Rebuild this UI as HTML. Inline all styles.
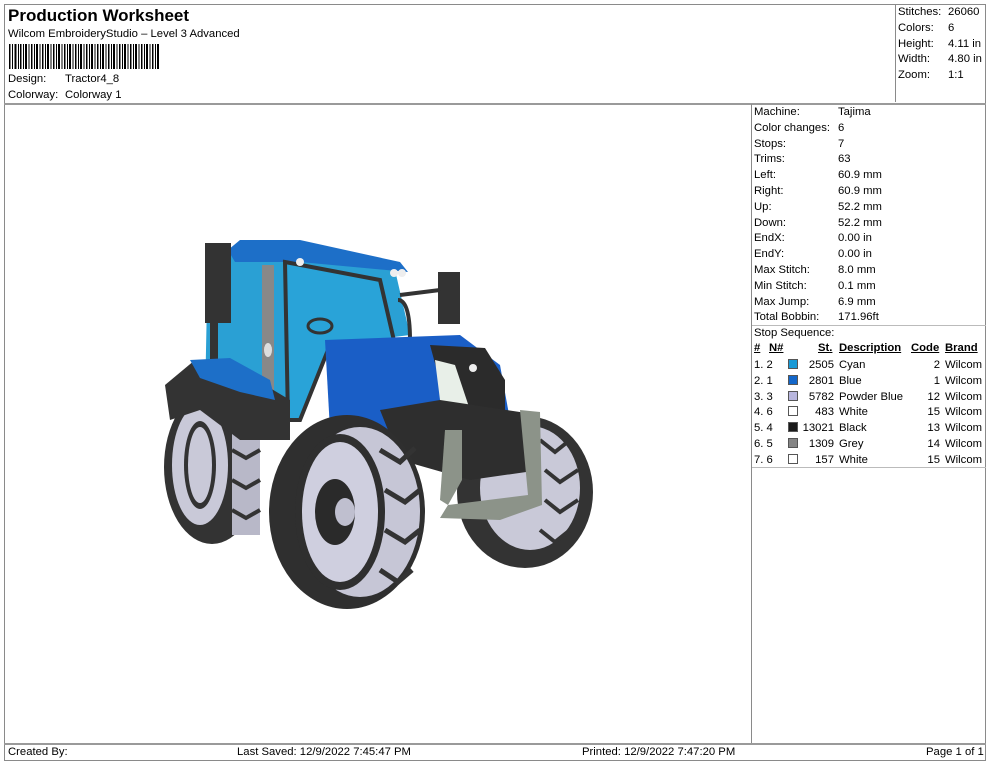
<!DOCTYPE html>
<html><head><meta charset="utf-8">
<style>
*{margin:0;padding:0;box-sizing:border-box}
body{width:990px;height:762px;background:#fff;font-family:"Liberation Sans",Arial,sans-serif;font-size:11.3px;color:#000;position:relative;overflow:hidden}
.a{position:absolute;white-space:nowrap}
.ln{position:absolute;background:#8a8a8a}
.sw{display:inline-block;width:10px;height:10px;border:1px solid #555;vertical-align:-1px}
</style></head><body>
<div class="ln" style="left:4px;top:4px;width:982px;height:1px"></div>
<div class="ln" style="left:4px;top:4px;width:1px;height:757px"></div>
<div class="ln" style="left:985px;top:4px;width:1px;height:757px"></div>
<div class="ln" style="left:4px;top:103px;width:982px;height:2px;background:#9a9a9a"></div>
<div class="ln" style="left:895px;top:4px;width:1px;height:98px"></div>
<div class="ln" style="left:751px;top:104px;width:1px;height:640px"></div>
<div class="ln" style="left:752px;top:325px;width:234px;height:1px;background:#bbb"></div>
<div class="ln" style="left:752px;top:467px;width:234px;height:1px;background:#bbb"></div>
<div class="ln" style="left:4px;top:743px;width:982px;height:2px;background:#9a9a9a"></div>
<div class="ln" style="left:4px;top:760px;width:982px;height:1px"></div>

<div class="a" style="left:8px;top:6px;font-size:17px;font-weight:bold">Production Worksheet</div>
<div class="a" style="left:8px;top:28px">Wilcom EmbroideryStudio – Level 3 Advanced</div>
<svg class="a" style="left:9px;top:44px" width="150" height="25">
<rect x="0" y="0" width="1.5" height="25"/><rect x="3" width="1" height="25"/><rect x="5.5" width="2" height="25"/><rect x="9" width="1" height="25"/><rect x="11" width="1.5" height="25"/><rect x="14" width="1" height="25"/><rect x="16" width="2" height="25"/><rect x="19.5" width="1" height="25"/><rect x="22" width="1.5" height="25"/><rect x="25" width="1" height="25"/><rect x="27" width="2" height="25"/><rect x="30.5" width="1" height="25"/><rect x="33" width="1.5" height="25"/><rect x="36" width="1" height="25"/><rect x="38" width="2" height="25"/><rect x="41.5" width="1" height="25"/><rect x="44" width="1.5" height="25"/><rect x="47" width="1" height="25"/><rect x="49" width="2" height="25"/><rect x="52.5" width="1" height="25"/><rect x="55" width="1.5" height="25"/><rect x="58" width="1" height="25"/><rect x="60" width="2" height="25"/><rect x="63.5" width="1" height="25"/><rect x="66" width="1.5" height="25"/><rect x="69" width="1" height="25"/><rect x="71" width="2" height="25"/><rect x="74.5" width="1" height="25"/><rect x="77" width="1.5" height="25"/><rect x="80" width="1" height="25"/><rect x="82" width="2" height="25"/><rect x="85.5" width="1" height="25"/><rect x="88" width="1.5" height="25"/><rect x="91" width="1" height="25"/><rect x="93" width="2" height="25"/><rect x="96.5" width="1" height="25"/><rect x="99" width="1.5" height="25"/><rect x="102" width="1" height="25"/><rect x="104" width="2" height="25"/><rect x="107.5" width="1" height="25"/><rect x="110" width="1.5" height="25"/><rect x="113" width="1" height="25"/><rect x="115" width="2" height="25"/><rect x="118.5" width="1" height="25"/><rect x="121" width="1.5" height="25"/><rect x="124" width="1" height="25"/><rect x="126" width="2" height="25"/><rect x="129.5" width="1" height="25"/><rect x="132" width="1.5" height="25"/><rect x="135" width="1" height="25"/><rect x="137" width="2" height="25"/><rect x="140.5" width="1" height="25"/><rect x="143" width="1.5" height="25"/><rect x="146" width="1" height="25"/><rect x="148" width="2" height="25"/>
</svg>
<div class="a" style="left:8px;top:73px">Design:</div><div class="a" style="left:65px;top:73px">Tractor4_8</div>
<div class="a" style="left:8px;top:89px">Colorway:</div><div class="a" style="left:65px;top:89px">Colorway 1</div>

<div class="a" style="left:898px;top:5px;line-height:15.8px">Stitches:<br>Colors:<br>Height:<br>Width:<br>Zoom:</div>
<div class="a" style="left:948px;top:5px;line-height:15.8px">26060<br>6<br>4.11 in<br>4.80 in<br>1:1</div>

<div class="a" style="left:754px;top:105px;line-height:15.8px">Machine:<br>Color changes:<br>Stops:<br>Trims:<br>Left:<br>Right:<br>Up:<br>Down:<br>EndX:<br>EndY:<br>Max Stitch:<br>Min Stitch:<br>Max Jump:<br>Total Bobbin:<br>Stop Sequence:</div>
<div class="a" style="left:838px;top:105px;line-height:15.8px">Tajima<br>6<br>7<br>63<br>60.9 mm<br>60.9 mm<br>52.2 mm<br>52.2 mm<br>0.00 in<br>0.00 in<br>8.0 mm<br>0.1 mm<br>6.9 mm<br>171.96ft</div>

<div class="a" style="left:754px;top:342px;font-weight:bold;text-decoration:underline">#</div>
<div class="a" style="left:769px;top:342px;font-weight:bold;text-decoration:underline">N#</div>
<div class="a" style="left:818px;top:342px;font-weight:bold;text-decoration:underline">St.</div>
<div class="a" style="left:839px;top:342px;font-weight:bold;text-decoration:underline">Description</div>
<div class="a" style="left:911px;top:342px;font-weight:bold;text-decoration:underline">Code</div>
<div class="a" style="left:945px;top:342px;font-weight:bold;text-decoration:underline">Brand</div>
<div class="a" style="left:754px;top:358px;line-height:15.8px">1. 2<br>2. 1<br>3. 3<br>4. 6<br>5. 4<br>6. 5<br>7. 6</div>
<div class="a" style="left:788px;top:358px;line-height:15.8px">
<span class="sw" style="background:#1a9ad6"></span><br><span class="sw" style="background:#1366c9"></span><br><span class="sw" style="background:#b8b6de"></span><br><span class="sw" style="background:#fff"></span><br><span class="sw" style="background:#1a1a1a"></span><br><span class="sw" style="background:#858585"></span><br><span class="sw" style="background:#fff"></span></div>
<div class="a" style="left:796px;top:358px;width:38px;text-align:right;line-height:15.8px">2505<br>2801<br>5782<br>483<br>13021<br>1309<br>157</div>
<div class="a" style="left:839px;top:358px;line-height:15.8px">Cyan<br>Blue<br>Powder Blue<br>White<br>Black<br>Grey<br>White</div>
<div class="a" style="left:900px;top:358px;width:40px;text-align:right;line-height:15.8px">2<br>1<br>12<br>15<br>13<br>14<br>15</div>
<div class="a" style="left:945px;top:358px;line-height:15.8px">Wilcom<br>Wilcom<br>Wilcom<br>Wilcom<br>Wilcom<br>Wilcom<br>Wilcom</div>

<div class="a" style="left:8px;top:746px">Created By:</div>
<div class="a" style="left:237px;top:746px">Last Saved: 12/9/2022 7:45:47 PM</div>
<div class="a" style="left:582px;top:746px">Printed: 12/9/2022 7:47:20 PM</div>
<div class="a" style="left:926px;top:746px">Page 1 of 1</div>

<svg class="a" style="left:0;top:0" width="750" height="740">
<!-- right front wheel -->
<ellipse cx="525" cy="492" rx="68" ry="76" fill="#333"/>
<ellipse cx="530" cy="488" rx="50" ry="62" fill="#c9c9d8"/>
<g stroke="#333" stroke-width="4" fill="none">
<polyline points="540,440 555,452 570,440"/><polyline points="545,470 560,482 578,470"/><polyline points="545,500 560,512 578,500"/><polyline points="540,530 555,542 570,530"/>
</g>
<!-- rear wheel -->
<ellipse cx="212" cy="467" rx="48" ry="77" fill="#333"/>
<ellipse cx="200" cy="465" rx="28" ry="60" fill="#c9c9d8"/>
<ellipse cx="200" cy="465" rx="16" ry="44" fill="#333"/>
<ellipse cx="200" cy="465" rx="12" ry="38" fill="#c9c9d8"/>
<rect x="232" y="420" width="28" height="115" fill="#b8b8c8"/>
<g stroke="#333" stroke-width="4" fill="none">
<polyline points="232,450 246,458 260,450"/><polyline points="232,480 246,488 260,480"/><polyline points="232,510 246,518 260,510"/>
</g>
<!-- cab -->
<polygon points="207,300 215,255 300,252 395,270 410,335 330,345 300,420 240,430 205,400" fill="#2aa0d4"/>
<polygon points="228,250 240,240 300,240 400,262 408,272 300,262 235,262" fill="#1d6fc8"/>
<rect x="205" y="243" width="26" height="80" fill="#333"/>
<rect x="210" y="320" width="8" height="50" fill="#333"/>
<rect x="262" y="265" width="12" height="160" fill="#888"/>
<polygon points="285,262 380,280 395,345 330,345 300,420 288,420" fill="#29a3d8" stroke="#333" stroke-width="4"/>
<circle cx="300" cy="262" r="4" fill="#eee"/><circle cx="402" cy="273" r="4" fill="#eee"/><circle cx="394" cy="273" r="4" fill="#eee"/>
<ellipse cx="320" cy="326" rx="12" ry="7" fill="none" stroke="#333" stroke-width="3"/>
<ellipse cx="268" cy="350" rx="4" ry="7" fill="#ddd"/>
<rect x="438" y="272" width="22" height="52" fill="#333"/>
<line x1="400" y1="295" x2="440" y2="290" stroke="#333" stroke-width="4"/>
<path d="M398 300 Q410 300 410 340" stroke="#333" stroke-width="4" fill="none"/>
<!-- left black fender -->
<polygon points="165,385 195,360 240,370 290,400 290,440 240,440 200,410 170,420" fill="#333"/>
<polygon points="190,360 230,358 270,380 275,400 240,392 200,378" fill="#1d6fc8"/>
<!-- hood -->
<polygon points="325,340 460,335 500,365 510,420 470,440 330,430" fill="#1a5ec6"/>
<polygon points="430,345 485,348 505,380 505,420 470,425 445,400" fill="#2b2b2b"/>
<polygon points="435,360 455,365 470,410 450,420 440,400" fill="#e8efe8"/>
<circle cx="473" cy="368" r="4" fill="#eee"/>
<!-- black front block -->
<polygon points="380,410 440,400 540,415 540,470 470,480 400,460" fill="#2e2e2e"/>
<!-- grey bumper -->
<polygon points="520,410 540,412 542,505 500,520 440,518 448,505 528,495" fill="#8c9389"/>
<polygon points="445,430 462,430 462,480 448,505 440,500" fill="#8c9389"/>
<!-- front big wheel -->
<ellipse cx="347" cy="512" rx="78" ry="97" fill="#2f2f2f"/>
<ellipse cx="360" cy="512" rx="60" ry="85" fill="#c6c6d6"/>
<g stroke="#333" stroke-width="5" fill="none">
<polyline points="380,450 400,462 415,448"/><polyline points="385,490 405,502 420,490"/><polyline points="385,530 405,542 420,530"/><polyline points="380,570 398,582 412,570"/>
</g>
<ellipse cx="340" cy="512" rx="45" ry="78" fill="#2f2f2f"/>
<ellipse cx="340" cy="512" rx="38" ry="70" fill="#cfcfdf"/>
<ellipse cx="335" cy="512" rx="20" ry="33" fill="#2a2a2a"/>
<ellipse cx="345" cy="512" rx="10" ry="14" fill="#bfbfcf"/>
</svg>
</body></html>
